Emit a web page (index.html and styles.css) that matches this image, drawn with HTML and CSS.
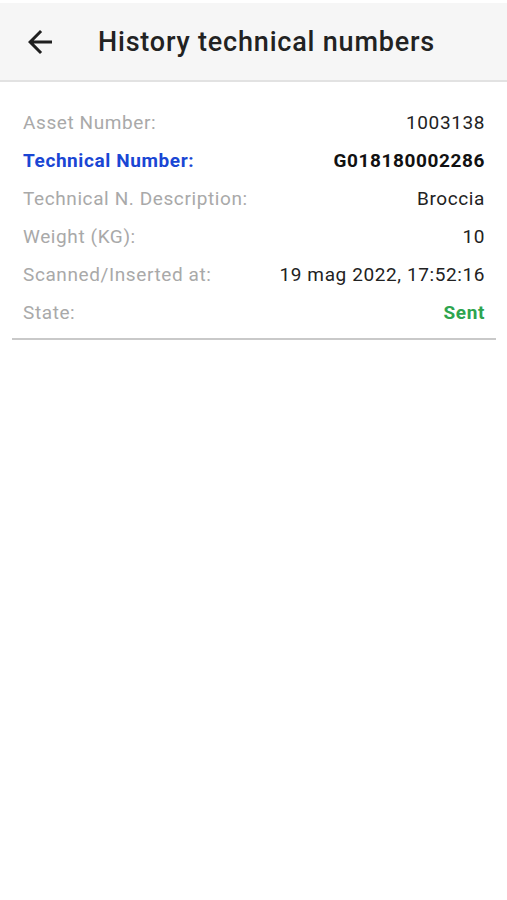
FILE: index.html
```html
<!DOCTYPE html>
<html lang="en">
<head>
<meta charset="utf-8">
<title>History technical numbers</title>
<link rel="stylesheet" href="styles.css">
</head>
<body>
<div class="screen">
  <header class="appbar">
    <button class="back" aria-label="Back">
      <svg viewBox="0 0 24 24" width="36" height="36"><path d="M20 11H7.83l5.59-5.59L12 4l-8 8 8 8 1.41-1.41L7.83 13H20v-2z" fill="#1f1f1f"/></svg>
    </button>
    <h1 class="title">History technical numbers</h1>
  </header>
  <main class="content">
    <section class="card">
      <div class="row"><span class="label">Asset Number:</span><span class="value">1003138</span></div>
      <div class="row"><span class="label label-accent">Technical Number:</span><span class="value value-strong">G018180002286</span></div>
      <div class="row"><span class="label">Technical N. Description:</span><span class="value">Broccia</span></div>
      <div class="row"><span class="label">Weight (KG):</span><span class="value">10</span></div>
      <div class="row"><span class="label">Scanned/Inserted at:</span><span class="value">19 mag 2022, 17:52:16</span></div>
      <div class="row"><span class="label">State:</span><span class="value value-ok">Sent</span></div>
    </section>
  </main>
</div>
</body>
</html>
```

FILE: styles.css
```css
* { box-sizing: border-box; }
html, body { margin: 0; padding: 0; background: #ffffff; }
body { font-family: Roboto, "Noto Sans", Arial, sans-serif; color: #222; }
.screen { padding-top: 3px; min-height: 900px; }
.appbar {
  height: 79px;
  background: #f6f6f6;
  border-bottom: 2px solid #e2e2e2;
  display: flex;
  align-items: center;
  padding-left: 22px;
}
.back {
  width: 36px; height: 36px;
  border: 0; padding: 0; background: transparent;
  display: flex; align-items: center; justify-content: center;
}
.title {
  margin: 0 0 0 40px;
  font-size: 27px;
  font-weight: 500;
  color: #222;
  letter-spacing: 0.8px;
}
.content { padding: 21px 11px 0 12px; }
.card { border-bottom: 2px solid #c9c9c9; padding: 0 11px 7px 11px; }
.row {
  display: flex;
  justify-content: space-between;
  align-items: center;
  height: 38px;
  font-size: 19px;
  letter-spacing: 0.6px;
}
.label { color: #a9a9a9; }
.label-accent { color: #1a46d4; font-weight: 700; }
.value { color: #222; }
.value-strong { font-weight: 700; color: #111; }
.value-ok { color: #2ea44f; font-weight: 700; }
```
